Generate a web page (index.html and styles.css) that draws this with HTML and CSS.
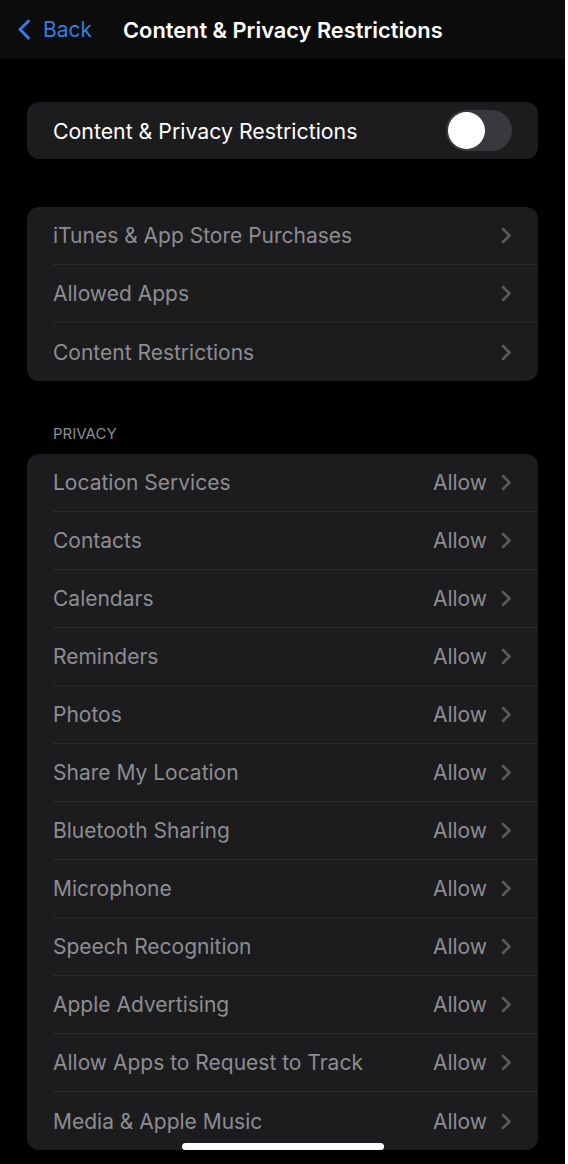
FILE: index.html
```html
<!DOCTYPE html>
<html lang="en">
<head>
    <meta charset="UTF-8">
    <meta name="viewport" content="width=device-width, initial-scale=1.0">
    <title>Content &amp; Privacy Restrictions</title>
    <link rel="stylesheet" href="styles.css">
</head>
<body>
    <div class="screen">
        <header class="nav">
            <a class="back" href="#">
                <svg width="14" height="21" viewBox="0 0 14 21"><path d="M11.5 2 L3 10.5 L11.5 19" fill="none" stroke="#2f80e4" stroke-width="3" stroke-linecap="round" stroke-linejoin="round"/></svg>
                <span>Back</span>
            </a>
            <h1 class="title">Content &amp; Privacy Restrictions</h1>
        </header>

        <main class="content">
            <section class="card">
                <div class="row main-row">
                    <div class="row-inner">
                        <span class="label on">Content &amp; Privacy Restrictions</span>
                        <span class="toggle"><span class="knob"></span></span>
                    </div>
                </div>
            </section>

            <section class="card gap">
                <div class="row"><div class="row-inner"><span class="label">iTunes &amp; App Store Purchases</span><span class="chev"></span></div></div>
                <div class="row"><div class="row-inner"><span class="label">Allowed Apps</span><span class="chev"></span></div></div>
                <div class="row"><div class="row-inner"><span class="label">Content Restrictions</span><span class="chev"></span></div></div>
            </section>

            <h2 class="section-title">PRIVACY</h2>

            <section class="card" id="privacy"></section>
        </main>

        <div class="home-bar"></div>
    </div>

    <script>
        const items = [
            "Location Services", "Contacts", "Calendars", "Reminders", "Photos",
            "Share My Location", "Bluetooth Sharing", "Microphone", "Speech Recognition",
            "Apple Advertising", "Allow Apps to Request to Track", "Media & Apple Music"
        ];
        const list = document.getElementById("privacy");
        items.forEach((name) => {
            const row = document.createElement("div");
            row.className = "row";
            row.innerHTML = `<div class="row-inner"><span class="label"></span><span class="value">Allow</span><span class="chev"></span></div>`;
            row.querySelector(".label").textContent = name;
            list.appendChild(row);
        });

        // chevrons drawn as svg
        document.querySelectorAll(".chev").forEach((c) => {
            c.innerHTML = '<svg width="11" height="17" viewBox="0 0 11 17"><path d="M2 2 L8.5 8.5 L2 15" fill="none" stroke="#5b5b5f" stroke-width="2.6" stroke-linecap="round" stroke-linejoin="round"/></svg>';
        });
    </script>
</body>
</html>
```

FILE: styles.css
```css
body {
    margin: 0;
    background-color: #fff;
    font-family: Inter, "Noto Sans", Arial, sans-serif;
}
.screen {
    position: relative;
    width: 565px;
    height: 1164px;
    background-color: #000;
    overflow: hidden;
}
.nav {
    height: 59px;
    background-color: #0c0c0c;
    display: flex;
    align-items: center;
    padding-left: 17px;
}
.back {
    display: flex;
    align-items: center;
    color: #2f80e4;
    text-decoration: none;
    font-size: 21px;
}
.back span {
    margin-left: 12px;
}
.title {
    margin: 0 0 0 31px;
    color: #fff;
    font-size: 21.8px;
    font-weight: 600;
}
.content {
    padding: 43px 27px 0 27px;
}
.card {
    background-color: #1c1c1e;
    border-radius: 12px;
    overflow: hidden;
}
.card.gap {
    margin-top: 48px;
}
.row {
    padding-left: 26px;
}
.row-inner {
    height: 58px;
    display: flex;
    align-items: center;
    padding-right: 26px;
    border-bottom: 1px solid #2c2c2f;
    box-sizing: border-box;
}
.main-row .row-inner {
    height: 57px;
}
.row:last-child .row-inner {
    border-bottom: none;
}
.label {
    flex: 1;
    color: #8d8d92;
    font-size: 21px;
}
.label.on {
    color: #fff;
    font-size: 21.3px;
}
.value {
    color: #8d8d92;
    font-size: 21px;
    margin-right: 14px;
}
.chev {
    display: flex;
    align-items: center;
}
.toggle {
    width: 66px;
    height: 41px;
    border-radius: 21px;
    background-color: #39393d;
    display: flex;
    align-items: center;
    padding-left: 2px;
    box-sizing: border-box;
}
.knob {
    width: 37px;
    height: 37px;
    border-radius: 50%;
    background-color: #fff;
}
.section-title {
    margin: 43px 0 10px 26px;
    color: #8d8d92;
    font-size: 15px;
    font-weight: 400;
    line-height: 20px;
}
.home-bar {
    position: absolute;
    left: 182px;
    top: 1143px;
    width: 202px;
    height: 7px;
    border-radius: 4px;
    background-color: #fff;
}
```
